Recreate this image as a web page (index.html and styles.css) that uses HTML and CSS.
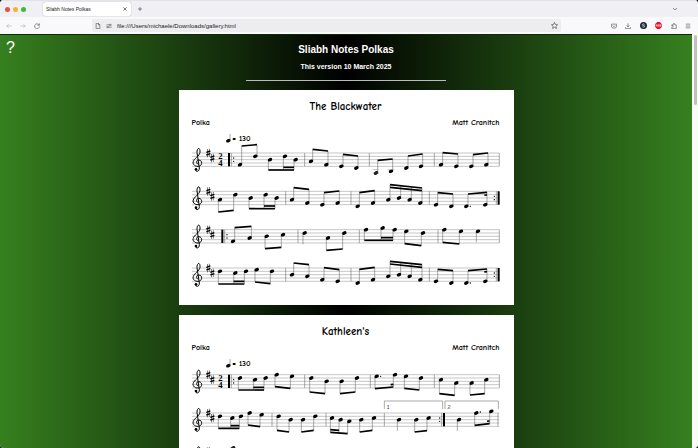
FILE: index.html
```html
<!DOCTYPE html>
<html lang="en">
<head>
<meta charset="utf-8">
<title>Sliabh Notes Polkas</title>
<link rel="stylesheet" href="styles.css">
</head>
<body>
<div class="window">
  <header class="tabs">
    <div class="lights"><i class="light close"></i><i class="light minimise"></i><i class="light expand"></i></div>
    <div class="tab">
      <span>Sliabh Notes Polkas</span>
      <button aria-label="Close tab"><svg class="tiny" viewBox="0 0 10 10"><path d="M1 1l8 8M9 1l-8 8"/></svg></button>
    </div>
    <button class="new-tab" aria-label="New tab"><svg class="tiny" viewBox="0 0 10 10"><path d="M5 0v10M0 5h10"/></svg></button>
    <button class="list-tabs" aria-label="List all tabs"><svg class="tiny" viewBox="0 0 10 10"><path d="M0 3l5 4 5-4"/></svg></button>
  </header>
  <nav class="toolbar">
    <div class="history">
      <button class="faded" aria-label="Back"><svg class="icon" viewBox="0 0 16 16"><path d="M15 8H2M7 3L2 8l5 5"/></svg></button>
      <button class="faded" aria-label="Forward"><svg class="icon" viewBox="0 0 16 16"><path d="M1 8h13M9 3l5 5-5 5"/></svg></button>
      <button aria-label="Reload"><svg class="icon" viewBox="0 0 16 16"><path d="M13 4.500A6.500 6.500 0 1 0 14.500 9M14.500 1v5h-5"/></svg></button>
    </div>
    <div class="address">
      <svg class="icon" viewBox="0 0 16 16"><path d="M3 1h6l4 4v10H3zM9 1v4h4"/></svg>
      <svg class="icon" viewBox="0 0 16 16"><path d="M1 5h8M13 5h2M1 11h2M7 11h8"/><circle cx="11" cy="5" r="2"/><circle cx="5" cy="11" r="2"/></svg>
      <input type="text" aria-label="Address" value="file:///Users/michaele/Downloads/gallery.html">
      <button aria-label="Bookmark"><svg class="icon star" viewBox="0 0 16 16"><path d="M8 1l2.200 4.500 4.800.7-3.500 3.500.8 5L8 12.300l-4.300 2.400.8-5L1 6.200l4.800-.7z"/></svg></button>
    </div>
    <div class="tools">
      <button aria-label="Pocket"><svg class="icon" viewBox="0 0 16 16"><path d="M1 3h14v5a7 6 0 0 1-14 0zM4.500 6.500L8 10l3.500-3.500"/></svg></button>
      <button aria-label="Downloads"><svg class="icon" viewBox="0 0 16 16"><path d="M8 1v9M4 6.500l4 4 4-4M1 11v3.500h14V11"/></svg></button>
      <button aria-label="Account"><svg class="badge" viewBox="0 0 16 16"><circle cx="8" cy="8" r="8" fill="#282a3a"/><path d="M10.500 5.500Q8 3.500 6 5.500T8 8t2 2.700-4.500 0" fill="none" stroke="#fff" stroke-width="1.500"/></svg></button>
      <button aria-label="Ad blocker"><svg class="badge" viewBox="0 0 16 16"><path d="M5 0h6l5 5v6l-5 5H5l-5-5V5z" fill="#e2162c"/><path d="M2 10V6h2.500v4M2 8.500h2.500M6.500 6v4H9V6zM6.500 8H9M11 6v4h3V6zM11 8h3" fill="none" stroke="#fff"/></svg></button>
      <button aria-label="Extensions"><svg class="icon" viewBox="0 0 16 16"><path d="M2 15v-4h2a2 2 0 0 0 0-4H2V5h4V3a2 2 0 0 1 4 0v2h4v10z"/></svg></button>
      <button aria-label="Menu"><svg class="icon" viewBox="0 0 16 16"><path d="M2 3h12M2 8h12M2 13h12"/></svg></button>
    </div>
  </nav>
  <div class="viewport">
    <main class="page">
      <a class="help" href="#help" aria-label="Help">?</a>
      <h1>Sliabh Notes Polkas</h1>
      <p class="version">This version 10 March 2025</p>
      <hr>
      <article class="tune">
        <h2>The Blackwater</h2>
        <div class="credits"><span>Polka</span><span>Matt Cranitch</span></div>
        <svg class="score" data-tune="blackwater" role="img" aria-label="The Blackwater, notation"></svg>
      </article>
      <article class="tune">
        <h2>Kathleen's</h2>
        <div class="credits"><span>Polka</span><span>Matt Cranitch</span></div>
        <svg class="score" data-tune="kathleens" role="img" aria-label="Kathleen's, notation"></svg>
      </article>
    </main>
    <div class="scrollbar"><div class="thumb"></div></div>
  </div>
</div>
<script src="score.js"></script>
</body>
</html>
```
FILE: styles.css
```css
* { box-sizing: border-box; }
body { margin: 0; background: #111; font-family: "Liberation Sans", Arial, sans-serif; }
button { border: 0; padding: 0; background: none; color: inherit; display: flex; align-items: center; }
svg { display: block; }

.window { height: 100vh; display: flex; flex-direction: column; overflow: hidden; border-radius: 4px; background: #f9f9fb; color: #444; }
.icon, .tiny { fill: none; stroke: currentColor; stroke-width: 1.5; }
.icon { width: 6px; height: 6px; flex: none; }
.star { width: 7px; height: 7px; }
.tiny { width: 4px; height: 4px; }
.badge { width: 7px; height: 7px; }

.tabs { flex: none; height: 17px; display: flex; align-items: center; background: #efeff4; padding: 0 21px 0 5px; border-top: 1px solid #e2e2e8; }
.lights { display: flex; gap: 3px; width: 38px; }
.light { width: 5px; height: 5px; border-radius: 50%; }
.close { background: #ee4b45; }
.minimise { background: #f5b32c; }
.expand { background: #3fba35; }
.tab { width: 88px; height: 14px; display: flex; align-items: center; justify-content: space-between; padding: 0 4px 0 3px; background: #fff; border-radius: 2px; box-shadow: 0 0 1px #888; font-size: 5px; color: #222; }
.new-tab { margin-left: 7px; }
.list-tabs { margin-left: auto; }

.toolbar { flex: none; height: 17px; display: flex; align-items: center; padding: 0 7px 0 6px; }
.history { display: flex; gap: 8px; width: 86px; }
.faded { color: #aaa; }
.address { flex: 1; height: 13px; display: flex; align-items: center; gap: 5px; padding: 0 3px; background: #ededf0; border-radius: 2px; }
.address input { flex: 1; min-width: 0; border: 0; padding: 0; outline: 0; background: none; font: 6px "Liberation Sans", Arial, sans-serif; color: #222; }
.tools { display: flex; align-items: center; justify-content: space-between; width: 80px; margin-left: 50px; }

.viewport { flex: 1; min-height: 0; display: flex; }
.page { position: relative; flex: 1; overflow: hidden; padding-top: 8px; background: linear-gradient(90deg, #36801f, #000 50%, #36801f); border-top: 1px solid #0b2a05; color: #fff; text-align: center; }
.help { position: absolute; left: 6px; top: 4px; font-size: 16px; line-height: 18px; color: #fff; text-decoration: none; }
h1 { margin: 0; font-size: 10px; line-height: 14px; }
.version { margin: 4px 0 0; font-size: 7px; line-height: 12px; font-weight: bold; }
hr { width: 29%; margin: 7px auto 9px; border: 0; border-top: 1px solid #bbb; }
.scrollbar { width: 6px; background: #fafafa; padding: 1px 1px 0 2px; }
.thumb { height: 70px; border-radius: 2px; background: #c1c1c1; }

.tune { width: 335px; max-width: 96%; margin: 0 auto 10px; padding: 10px 14px 5px 13px; background: #fff; color: #000; font-family: "Comic Sans MS", "Comic Neue", "Open Sans", sans-serif; }
h2 { margin: 0; font-size: 11px; line-height: 14px; font-weight: 600; }
.credits { display: flex; justify-content: space-between; margin: 4px 0 5px; font-size: 8px; line-height: 10px; font-weight: 600; }
.score { width: 100%; height: auto; overflow: visible; }
.score text { font-family: "Comic Sans MS", "Comic Neue", "Open Sans", sans-serif; font-size: 24px; font-weight: 600; }
.score .meter { font-family: "Liberation Serif", serif; font-size: 26px; font-weight: bold; text-anchor: middle; }
.score .volta { font-size: 20px; font-weight: 400; }
.line { stroke: #8c8c8c; stroke-width: 1.5; fill: none; }
.stem { stroke: #555; stroke-width: 1.5; fill: none; }
.beam { stroke: #000; stroke-width: 5; fill: none; }
.clef { stroke: #000; stroke-width: 3; fill: none; }
.sharp { stroke: #000; stroke-width: 1.5; fill: none; }
.sharp .bars { stroke-width: 4; }
```
FILE: score.js
```js
// Ten units are one staff space; y counts down from the top line of a staff.
// A group is [stem direction, beam start y, beam end y, notes, second beam range].
// A range of "stub" draws a short second beam on the last note.
const U = 'up', D = 'down';
const ending = [
  [U, 4, -2, [[497, 45], [543, 35]]],
  [U, -20, -10, [[589, 25], [621, 20], [653, 25], [685, 35]], [0, 3]],
  [U, 4, 8, [[732, 40], [778, 45]]],
  [U, 8, 3, [[823, 45, 1], [880, 40]], 'stub']
];
const tunes = {
  blackwater: { top: -60, height: 500, staves: [
    { meter: true, open: 111, bars: [338, 532, 727, 922], groups: [
      [U, -21, -25, [[144, 35], [190, 10]]],
      [D, 51, 51, [[234, 20], [279, 10], [311, 20]], [1, 2]],
      [U, -11, -6, [[357, 25], [403, 35]]],
      [U, 4, 9, [[448, 40], [493, 45]]],
      [U, 22, 18, [[552, 60], [597, 55]]],
      [U, 9, 3, [[643, 45], [687, 40]]],
      [U, -1, 3, [[747, 35], [793, 40]]],
      [U, 5, 0, [[838, 40], [883, 35]]]
    ] },
    { close: 920, bars: [281, 477, 712], groups: [
      [D, 62, 57, [[84, 25], [130, 10]]],
      [D, 52, 52, [[176, 20], [221, 10], [254, 20]], [1, 2]],
      [U, -11, -6, [[300, 25], [346, 35]]],
      [U, 4, -1, [[391, 40], [437, 35]]],
      ...ending
    ] },
    { open: 91, bars: [318, 502, 738, 922], groups: [
      [U, -6, -10, [[123, 35], [173, 25]]],
      [D, 57, 53, [[224, 20], [273, 15]]],
      [D, 44, 44, [[338, 10]]],
      [D, 62, 58, [[408, 25], [457, 10]]],
      [D, 32, 32, [[522, 0], [572, -5], [608, 0]], [1, 2]],
      [D, 42, 48, [[643, 5], [693, 10]]],
      [D, 38, 43, [[757, 0], [807, 5]]],
      [D, 38, 38, [[858, 5]]]
    ] },
    { close: 920, bars: [281, 477, 712], groups: [
      [D, 48, 48, [[84, 10], [130, 15], [162, 10]], [1, 2]],
      [D, 42, 47, [[194, 5], [240, 10]]],
      [U, -15, -10, [[300, 20], [346, 25]]],
      [U, -1, 5, [[391, 35], [437, 40]]],
      ...ending
    ] }
  ] },
  kathleens: { top: -50, height: 490, staves: [
    { meter: true, open: 111, bars: [338, 535, 727, 922], groups: [
      [D, 46, 46, [[144, 10], [189, 15], [221, 10]], [1, 2]],
      [D, 36, 41, [[254, 0], [300, 5]]],
      [D, 52, 57, [[358, 10], [404, 20]]],
      [D, 57, 52, [[449, 20], [495, 10]]],
      [D, 42, 37, [[554, 5, 1], [609, 0]], 'stub'],
      [D, 41, 46, [[642, 5], [687, 10]]],
      [D, 57, 62, [[747, 15], [793, 25]]],
      [D, 61, 57, [[839, 25], [883, 15]]]
    ] },
    { close: 756, bars: [240, 402, 577, 918], voltas: [[577, 752, 1], [759, 919, 2]], groups: [
      [D, 46, 46, [[84, 10], [121, 15], [147, 10]], [1, 2]],
      [D, 36, 41, [[173, 0], [209, 5]]],
      [D, 52, 57, [[260, 10], [296, 20]]],
      [D, 57, 52, [[333, 20], [370, 10]]],
      [D, 58, 62, [[420, 15], [446, 20], [472, 25]], [0, 1]],
      [D, 57, 52, [[508, 20], [546, 15]]],
      [D, 54, 54, [[621, 20]]],
      [D, 57, 53, [[673, 20], [710, 15]]],
      [D, 54, 54, [[801, 20]]],
      [D, 37, 32, [[853, 0, 1], [898, -5]], 'stub']
    ] },
    { bars: [281, 502, 738, 922], groups: [
      [D, 30, 35, [[84, 5], [123, -10]]],
      [D, 52, 57, [[176, 10], [221, 20]]],
      [D, 57, 52, [[320, 20], [370, 10]]]
    ] }
  ] }
};

const path = (cls, d) => `<path class="${cls}" d="${d}"/>`;
const head = (x, y) => `<ellipse cx="${x}" cy="${y}" rx="7" ry="5" transform="rotate(-25 ${x} ${y})"/>`;
const dot = (x, y) => `<circle cx="${x}" cy="${y}" r="2"/>`;
const sharp = (x, y) => `<g class="sharp" transform="translate(${x} ${y})">` +
  path('uprights', 'M-2.500 -12V13M3 -13V12') + path('bars', 'M-6 -2L6 -6M-6 6L6 2') + '</g>';

function drawGroup([dir, y1, y2, notes, second]) {
  const side = dir === U ? 5 : -5;
  const inward = dir === U ? 8 : -8;
  const first = notes[0][0], last = notes[notes.length - 1][0];
  const beamY = x => last === first ? y1 : y1 + (y2 - y1) * (x - first) / (last - first);
  const beam = (a, b, shift) => path('beam', `M${a + side} ${beamY(a) + shift}L${b + side} ${beamY(b) + shift}`);
  let out = '';
  for (const [x, y, dotted] of notes) {
    out += path('stem', `M${x + side} ${y}V${beamY(x)}`) + head(x, y);
    if (dotted) out += dot(x + 12, y - (y % 10 ? 0 : 3));
    for (let l = 50; l <= y; l += 10) out += path('line', `M${x - 10} ${l}h20`);
    for (let l = -10; l >= y; l -= 10) out += path('line', `M${x - 10} ${l}h20`);
  }
  if (notes.length > 1) out += beam(first, last, 0);
  if (second === 'stub') out += beam(last - 8, last, inward);
  else if (second) out += beam(notes[second[0]][0], notes[second[1]][0], inward);
  return out;
}

function drawStaff(s, index) {
  let out = `<g transform="translate(0 ${index * 115})">`;
  for (let y = 0; y <= 40; y += 10) out += path('line', `M0 ${y}H922`);
  out += path('clef', 'M19 34C11 31 13 21 20 21C32 21 32 39 19 40C6 41 0 31 5 23C10 13 26 7 24 -7C22 -20 14 -12 15 -1L22 45C23 56 12 58 10 50') + '<circle cx="12" cy="49" r="4"/>';
  out += sharp(49, 0) + sharp(61, 15);
  if (s.meter) out += '<text class="meter" x="85" y="19">2</text><text class="meter" x="85" y="39">4</text>';
  for (const x of s.bars) out += path('stem', `M${x} 0V40`);
  if (s.open) out += `<rect x="${s.open - 3}" width="6" height="40"/>` + path('stem', `M${s.open + 7} 0V40`) + dot(s.open + 14, 15) + dot(s.open + 14, 25);
  if (s.close) out += `<rect x="${s.close - 3}" width="6" height="40"/>` + path('stem', `M${s.close - 7} 0V40`) + dot(s.close - 13, 15) + dot(s.close - 13, 25);
  for (const [a, b, n] of s.voltas || []) out += path('stem', `M${a} -12V-36H${b}V-12`) + `<text class="volta" x="${a + 7}" y="-13">${n}</text>`;
  return out + s.groups.map(drawGroup).join('') + '</g>';
}

for (const svg of document.querySelectorAll('.score')) {
  const tune = tunes[svg.dataset.tune];
  svg.setAttribute('viewBox', `0 ${tune.top} 924 ${tune.height}`);
  const base = tune.top + 24;
  svg.innerHTML = head(109, base - 1) + path('stem', `M114 ${base}v-21`) +
    `<text x="121" y="${base}">= 130</text>` + tune.staves.map(drawStaff).join('');
}
```
